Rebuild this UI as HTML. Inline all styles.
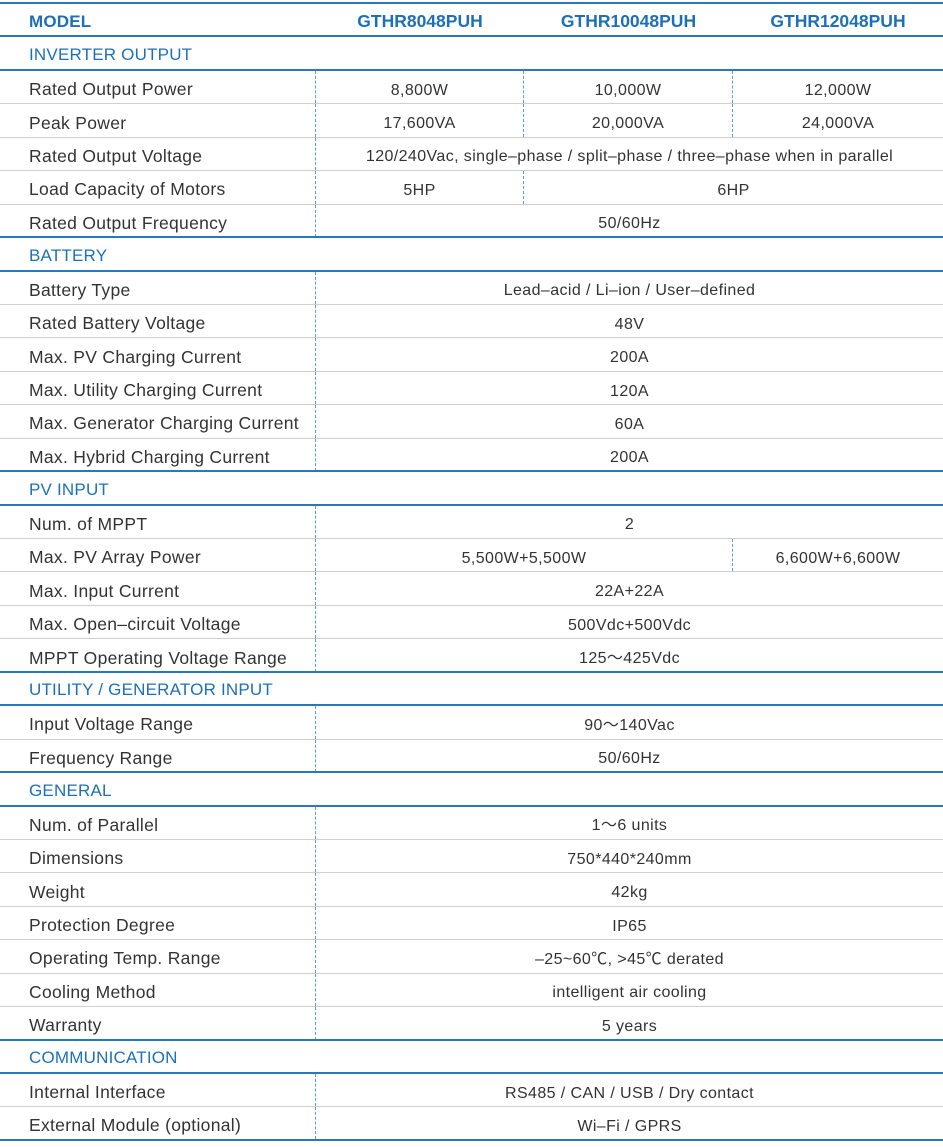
<!DOCTYPE html>
<html><head><meta charset="utf-8"><style>
*{box-sizing:border-box;margin:0;padding:0}
body{width:943px;height:1147px;background:#fff;font-family:"Liberation Sans","Noto Sans CJK SC",sans-serif;overflow:hidden}
.t{position:absolute;top:4px;left:0;width:943px}
.r{position:relative;height:33.44px;display:flex;border-bottom:1px solid #cfcfcf;color:#333}
.r.h,.r.m{border-bottom:2px solid #2878bd}
.r.h::before,.r.m::before{content:"";position:absolute;left:0;right:0;top:-2px;height:2px;background:#2878bd}
.l{padding-top:4px;line-height:18px}
.c{padding-top:7px;line-height:18px}
.m .c{padding-top:3px}
.c span{display:block;height:18px;line-height:18px}
.h .l,.m .l{color:#1d70b8;font-size:17px;letter-spacing:0.2px}
.m .l{font-weight:bold;padding-top:5px}
.l{width:316px;padding-left:29px;display:flex;align-items:center;font-size:17.5px;letter-spacing:0.3px}
.r:not(.h):not(.m) .l{border-right:1px dashed #5b9bd1}
.c{display:flex;align-items:center;justify-content:center;font-size:16px;letter-spacing:0.4px;flex:1}
.c.d{border-right:1px dashed #5b9bd1}
.w1{flex:0 0 208px}.w2{flex:0 0 417px}
.m .c{color:#1d70b8;font-weight:bold;font-size:17.5px;letter-spacing:0}
</style></head><body><div class="t">
<div class="r m"><div class="l">MODEL</div><div class="c w1">GTHR8048PUH</div><div class="c w1" style="flex-basis:209px">GTHR10048PUH</div><div class="c">GTHR12048PUH</div></div>
<div class="r h"><div class="l">INVERTER OUTPUT</div></div>
<div class="r"><div class="l">Rated Output Power</div><div class="c w1 d">8,800W</div><div class="c w1 d" style="flex-basis:209px">10,000W</div><div class="c">12,000W</div></div>
<div class="r"><div class="l">Peak Power</div><div class="c w1 d">17,600VA</div><div class="c w1 d" style="flex-basis:209px">20,000VA</div><div class="c">24,000VA</div></div>
<div class="r"><div class="l">Rated Output Voltage</div><div class="c">120/240Vac, single–phase / split–phase / three–phase when in parallel</div></div>
<div class="r"><div class="l">Load Capacity of Motors</div><div class="c w1 d">5HP</div><div class="c">6HP</div></div>
<div class="r"><div class="l">Rated Output Frequency</div><div class="c">50/60Hz</div></div>
<div class="r h"><div class="l">BATTERY</div></div>
<div class="r"><div class="l">Battery Type</div><div class="c">Lead–acid / Li–ion / User–defined</div></div>
<div class="r"><div class="l">Rated Battery Voltage</div><div class="c">48V</div></div>
<div class="r"><div class="l">Max. PV Charging Current</div><div class="c">200A</div></div>
<div class="r"><div class="l">Max. Utility Charging Current</div><div class="c">120A</div></div>
<div class="r"><div class="l">Max. Generator Charging Current</div><div class="c">60A</div></div>
<div class="r"><div class="l">Max. Hybrid Charging Current</div><div class="c">200A</div></div>
<div class="r h"><div class="l">PV INPUT</div></div>
<div class="r"><div class="l">Num. of MPPT</div><div class="c">2</div></div>
<div class="r"><div class="l">Max. PV Array Power</div><div class="c w2 d">5,500W+5,500W</div><div class="c">6,600W+6,600W</div></div>
<div class="r"><div class="l">Max. Input Current</div><div class="c">22A+22A</div></div>
<div class="r"><div class="l">Max. Open–circuit Voltage</div><div class="c">500Vdc+500Vdc</div></div>
<div class="r"><div class="l">MPPT Operating Voltage Range</div><div class="c"><span>125～425Vdc</span></div></div>
<div class="r h"><div class="l">UTILITY / GENERATOR INPUT</div></div>
<div class="r"><div class="l">Input Voltage Range</div><div class="c"><span>90～140Vac</span></div></div>
<div class="r"><div class="l">Frequency Range</div><div class="c">50/60Hz</div></div>
<div class="r h"><div class="l">GENERAL</div></div>
<div class="r"><div class="l">Num. of Parallel</div><div class="c"><span>1～6 units</span></div></div>
<div class="r"><div class="l">Dimensions</div><div class="c">750*440*240mm</div></div>
<div class="r"><div class="l">Weight</div><div class="c">42kg</div></div>
<div class="r"><div class="l">Protection Degree</div><div class="c">IP65</div></div>
<div class="r"><div class="l">Operating Temp. Range</div><div class="c"><span>–25~60℃, &gt;45℃ derated</span></div></div>
<div class="r"><div class="l">Cooling Method</div><div class="c">intelligent air cooling</div></div>
<div class="r"><div class="l">Warranty</div><div class="c">5 years</div></div>
<div class="r h"><div class="l">COMMUNICATION</div></div>
<div class="r"><div class="l">Internal Interface</div><div class="c">RS485 / CAN / USB / Dry contact</div></div>
<div class="r" style="border-bottom:2px solid #2878bd"><div class="l">External Module (optional)</div><div class="c">Wi–Fi / GPRS</div></div>
</div></body></html>
